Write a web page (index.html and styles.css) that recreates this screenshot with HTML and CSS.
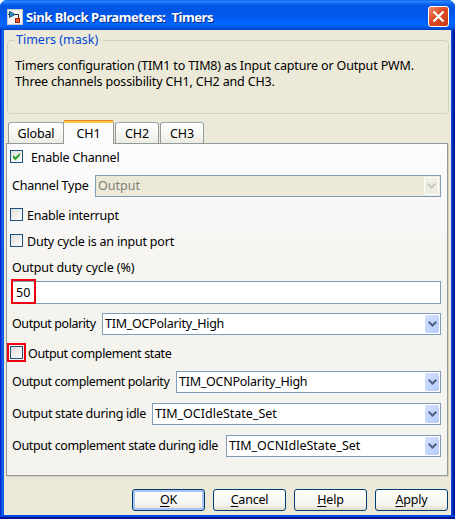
FILE: index.html
```html
<!DOCTYPE html>
<html lang="en">
<head>
<meta charset="utf-8">
<title>Sink Block Parameters: Timers</title>
<link rel="stylesheet" href="styles.css">
</head>
<body>
<div class="window">
  <header class="titlebar">
    <svg class="app-icon" width="16" height="16" viewBox="0 0 16 16">
      <rect x=".5" y=".5" width="15" height="15" fill="#f4f4f6" stroke="#c8c8cc"/>
      <path d="M1 5.5H3M8 5.5H11.5V9" fill="none" stroke="#222" />
      <path d="M2.5 2.5L8 5.5L2.5 8.5Z" fill="#2c8fc8" stroke="#15537c"/>
      <rect x="8.5" y="9.5" width="4" height="4" fill="#ef5a28" stroke="#9a2c0c"/>
    </svg>
    <h1 class="title">Sink Block Parameters:&nbsp; Timers</h1>
    <button class="close" aria-label="Close">
      <svg width="19" height="19" viewBox="0 0 19 19"><path d="M4.5 4.5L14.5 14.5M14.5 4.5L4.5 14.5" stroke="#fff" stroke-width="2.3"/></svg>
    </button>
  </header>
  <main class="client">
    <section class="group">
      <h2 class="group-title">Timers (mask)</h2>
      <p class="desc">Timers configuration (TIM1 to TIM8) as Input capture or Output PWM.<br>Three channels possibility CH1, CH2 and CH3.</p>
    </section>
    <nav class="tabs">
      <div class="tab tab-global">Global</div>
      <div class="tab active">CH1</div>
      <div class="tab tab-ch2">CH2</div>
      <div class="tab tab-ch3">CH3</div>
    </nav>
    <section class="panel">
      <div class="row check enable"><span class="box"><svg width="11" height="11" viewBox="0 0 11 11"><path d="M2 4V7L4.5 9.3L9 4.5V2L4.5 6.3Z" fill="#21a121"/></svg></span><span class="text">Enable Channel</span></div>
      <div class="row type"><span class="label">Channel Type</span><div class="combo disabled"><span>Output</span><i class="arrow"><svg width="9" height="6" viewBox="0 0 9 6"><path d="M.7 .7L4.5 4.5L8.3 .7" fill="none" stroke="currentColor" stroke-width="2"/></svg></i></div></div>
      <div class="row check interrupt"><span class="box"></span><span class="text">Enable interrupt</span></div>
      <div class="row check port"><span class="box"></span><span class="text">Duty cycle is an input port</span></div>
      <div class="row duty-label"><span class="label">Output duty cycle (%)</span></div>
      <div class="field">50<span class="mark mark-value"></span></div>
      <div class="row polarity"><span class="label">Output polarity</span><div class="combo"><span>TIM_OCPolarity_High</span><i class="arrow"><svg width="9" height="6" viewBox="0 0 9 6"><path d="M.7 .7L4.5 4.5L8.3 .7" fill="none" stroke="currentColor" stroke-width="2"/></svg></i></div></div>
      <div class="row check complement"><span class="box"><span class="mark mark-box"></span></span><span class="text">Output complement state</span></div>
      <div class="row n-polarity"><span class="label">Output complement polarity</span><div class="combo"><span>TIM_OCNPolarity_High</span><i class="arrow"><svg width="9" height="6" viewBox="0 0 9 6"><path d="M.7 .7L4.5 4.5L8.3 .7" fill="none" stroke="currentColor" stroke-width="2"/></svg></i></div></div>
      <div class="row idle"><span class="label">Output state during idle</span><div class="combo"><span>TIM_OCIdleState_Set</span><i class="arrow"><svg width="9" height="6" viewBox="0 0 9 6"><path d="M.7 .7L4.5 4.5L8.3 .7" fill="none" stroke="currentColor" stroke-width="2"/></svg></i></div></div>
      <div class="row n-idle"><span class="label">Output complement state during idle</span><div class="combo"><span>TIM_OCNIdleState_Set</span><i class="arrow"><svg width="9" height="6" viewBox="0 0 9 6"><path d="M.7 .7L4.5 4.5L8.3 .7" fill="none" stroke="currentColor" stroke-width="2"/></svg></i></div></div>
    </section>
    <footer class="buttons">
      <button class="btn default"><u>O</u>K</button>
      <button class="btn"><u>C</u>ancel</button>
      <button class="btn"><u>H</u>elp</button>
      <button class="btn"><u>A</u>pply</button>
    </footer>
  </main>
</div>
</body>
</html>
```
FILE: styles.css
```css
* { box-sizing: border-box; }
body {
  margin: 0;
  background: #fff;
  color: #000;
  font: 12.5px/16px "Noto Sans", "Liberation Sans", sans-serif;
}
.window {
  width: 455px;
  height: 519px;
  padding: 0 4px 4px;
  border-radius: 7px 7px 0 0;
  background: linear-gradient(90deg, #0019cf 0, #0831d9 1px, #166aee 2px, #0855dd 4px, #0855dd 451px, #0046e8 452px, #001ea0 453px, #00138c 455px);
  box-shadow: inset 0 -2px #00138c, inset 0 -4px #0046e8;
  overflow: hidden;
}
.titlebar {
  display: flex;
  align-items: center;
  height: 30px;
  margin: 0 -4px;
  padding: 3px 6px 0 7px;
  background: linear-gradient(#0a52d8 0, #2e8cff 1px, #1372f8 3px, #0458e6 5px, #0055e5 11px, #005cf2 18px, #0066ff 23px, #0062fa 26px, #0048cf 29px, #0040c4 30px);
}
.app-icon { flex: none; }
.title {
  flex: 1;
  margin: 0 0 0 3px;
  color: #fff;
  font-size: 13px;
  font-weight: 700;
  letter-spacing: -.42px;
  white-space: nowrap;
  text-shadow: 1px 1px #0a2c8c;
}
.close {
  width: 21px;
  height: 21px;
  padding: 0;
  border: 1px solid #fff;
  border-radius: 3px;
  background: linear-gradient(135deg, #f08c6c, #dd4a25 45%, #c83a14);
}
.close svg { display: block; }
.client {
  display: flow-root;
  height: 485px;
  padding: 0 3px 0 2px;
  background: #ece9d8;
}
.group {
  width: 442px;
  height: 74px;
  margin: 10px 0 0 1px;
  border: 1px solid #d0d0bf;
  border-radius: 4px;
}
.group-title {
  width: 88px;
  margin: -9px 0 0 7px;
  padding: 0 1px;
  background: #ece9d8;
  color: #0046d5;
  font-size: inherit;
  font-weight: 400;
}
.desc { margin: 10px 0 0 7px; letter-spacing: -.15px; white-space: nowrap; }
.tabs {
  display: flex;
  align-items: flex-end;
  height: 24px;
  margin: 6px 0 -1px 2px;
}
.tab {
  height: 22px;
  margin-right: 1px;
  padding-top: 3px;
  border: 1px solid #919b9c;
  border-top-color: #8fa9b8;
  border-radius: 3px 3px 0 0;
  background: linear-gradient(#fff, #f6f6f1 60%, #ebebe3);
  letter-spacing: -.15px;
  text-align: center;
}
.tab-global { width: 56px; margin-right: -1px; }
.tab-ch2 { width: 44px; }
.tab-ch3 { width: 44px; }
.tab.active {
  position: relative;
  width: 51px;
  height: 24px;
  border-top: 3px solid #ffc73c;
  border-bottom: 0;
  background: #fcfcfe;
}
.tab.active::before {
  content: "";
  display: block;
  height: 1px;
  margin: -6px 0 5px;
  background: #e68b2c;
}
.panel {
  width: 442px;
  height: 333px;
  padding: 6px 6px 0 3px;
  border: 1px solid #919b9c;
  background: linear-gradient(#fcfcfe, #f9f8f7 60px, #f4f3ee 150px);
  box-shadow: 1px 1px #d6d2c0;
}
.row { display: flex; align-items: center; height: 22px; white-space: nowrap; }
.label { flex: none; margin-left: 2px; letter-spacing: -.3px; }
.box {
  flex: none;
  position: relative;
  width: 13px;
  height: 13px;
  border: 1px solid #1c5180;
  background: linear-gradient(135deg, #dcdcd7, #fff);
}
.box svg { display: block; }
.text { margin: 2px 0 0 4px; letter-spacing: -.2px; }
.check { height: 13px; }
.enable .text { margin-left: 8px; }
.type { margin-top: 12px; }
.type .label { width: 83px; letter-spacing: -.25px; }
.interrupt { margin-top: 11px; }
.interrupt .text { letter-spacing: -.25px; }
.port { margin-top: 13px; }
.duty-label { height: 16px; margin-top: 13px; }
.duty-label .label { letter-spacing: -.1px; }
.field {
  position: relative;
  height: 23px;
  margin: 5px 0 9px 1px;
  padding: 3px 4px 0;
  border: 1px solid #7f9db9;
  background: #fff;
}
.mark { position: absolute; border: 2px solid #f00010; }
.mark-value { left: -1px; top: -3px; width: 25px; height: 25px; }
.mark-box { left: -4px; top: -4px; width: 19px; height: 19px; }
.polarity .label { width: 90px; letter-spacing: -.42px; }
.complement { margin-top: 11px; }
.complement .text { margin-left: 5px; letter-spacing: -.36px; }
.n-polarity { margin-top: 12px; }
.n-polarity .label { width: 164px; letter-spacing: -.38px; }
.idle { margin-top: 10px; }
.idle .label { width: 140px; }
.n-idle { margin-top: 10px; }
.n-idle .label { width: 214px; letter-spacing: -.36px; }
.combo {
  display: flex;
  flex: 1;
  align-items: center;
  justify-content: space-between;
  height: 22px;
  padding: 1px;
  border: 1px solid #7f9db9;
  background: #fff;
}
.combo > span { margin: 0 0 0 1px; }
.polarity .combo, .n-polarity .combo { letter-spacing: -.25px; }
.arrow {
  display: flex;
  align-items: center;
  justify-content: center;
  width: 14px;
  height: 18px;
  border-radius: 2px;
  background: linear-gradient(135deg, #d3e0fe, #b6cbfb);
  color: #4d6185;
}
.combo.disabled { background: #ece9d8; color: #807e73; }
.disabled .arrow { width: 15px; border: 1px solid #fff; background: #efeee6; color: #c9c7ba; }
.buttons { display: flex; justify-content: flex-end; gap: 8px; margin-top: 13px; }
.btn {
  width: 73px;
  height: 22px;
  padding: 0;
  border: 1px solid #003c74;
  border-radius: 3px;
  background: linear-gradient(#fff, #f3f3ef 75%, #e0dcd0);
  color: #000;
  font: inherit;
  letter-spacing: -.2px;
}
.default { box-shadow: inset 0 0 0 2px #aac3f3; }
.btn u { text-underline-offset: 2px; text-decoration-thickness: 1px; }
```
